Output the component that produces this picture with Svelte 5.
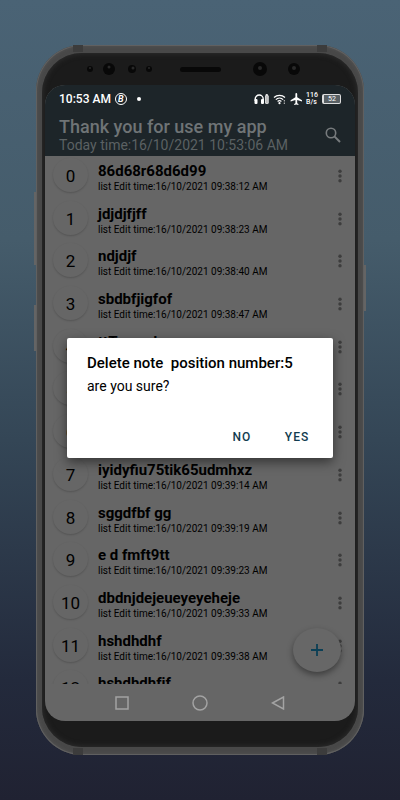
<!-- Notes app inside a phone frame, with the delete confirmation open -->
<script lang="ts">
	type Note = { title: string; edited: string };

	let notes: Note[] = $state([
		{ title: '86d68r68d6d99', edited: '09:38:12 AM' },
		{ title: 'jdjdjfjff', edited: '09:38:23 AM' },
		{ title: 'ndjdjf', edited: '09:38:40 AM' },
		{ title: 'sbdbfjigfof', edited: '09:38:47 AM' },
		{ title: 'ttTauzud', edited: '' },
		{ title: '', edited: '' },
		{ title: '', edited: '' },
		{ title: 'iyidyfiu75tik65udmhxz', edited: '09:39:14 AM' },
		{ title: 'sggdfbf gg', edited: '09:39:19 AM' },
		{ title: 'e d fmft9tt', edited: '09:39:23 AM' },
		{ title: 'dbdnjdejeueyeyeheje', edited: '09:39:33 AM' },
		{ title: 'hshdhdhf', edited: '09:39:38 AM' },
		{ title: 'hshdhdhfjf', edited: '' }
	]);

	let selected = $state(5);
	let dialogOpen = $state(true);

	function askDelete(index: number) {
		selected = index;
		dialogOpen = true;
	}

	function confirmDelete() {
		notes.splice(selected, 1);
		dialogOpen = false;
	}
</script>

<div class="backdrop">
	<div class="phone">
		<span class="key volume"></span>
		<span class="key bixby"></span>
		<span class="key power"></span>
		<span class="seam top left"></span>
		<span class="seam top right"></span>
		<span class="seam bottom left"></span>
		<span class="seam bottom right"></span>

		<div class="bezel">
			<div class="sensors">
				<svg width="240" height="20" viewBox="0 0 240 20" aria-hidden="true">
					<g fill="#080808">
						<circle cx="10" cy="10" r="3" />
						<circle cx="29" cy="10" r="6" />
						<circle cx="52" cy="10" r="4" />
						<circle cx="69" cy="10" r="3" />
						<rect x="100" y="8" width="41" height="5" rx="2.5" />
						<circle cx="180" cy="10" r="7" />
						<circle cx="214" cy="10" r="6" />
					</g>
					<g fill="#292929">
						<circle cx="10" cy="9" r="1" />
						<circle cx="29" cy="8" r="1.5" />
						<circle cx="53" cy="9" r="1.5" />
						<circle cx="69" cy="9" r="1" />
						<circle cx="180" cy="9" r="2" />
						<circle cx="214" cy="9" r="2" />
					</g>
				</svg>
			</div>

			<div class="screen">
				<div class="status">
					<span class="clock">10:53 AM</span>
					<span class="app-badge">B</span>
					<span class="dot"></span>
					<span class="fill"></span>
					<svg width="15" height="12" viewBox="0 0 15 12" aria-hidden="true">
						<path d="M1.2 8V6a4 4 0 0 1 8 0v2" fill="none" stroke="#fff" stroke-width="1.4" />
						<rect x="0.5" y="6" width="3" height="5" rx="1" fill="#fff" />
						<rect x="7" y="6" width="3" height="5" rx="1" fill="#fff" />
						<path d="M12 2.500V1.500h1.500v1" stroke="#ddd" fill="none" />
						<rect x="11.500" y="2.500" width="2.800" height="8" rx="0.500" fill="#bbb" stroke="#fff" stroke-width="0.700" />
					</svg>
					<svg width="13" height="12" viewBox="0 0 13 12" aria-hidden="true">
						<path d="M1 4.500a8 8 0 0 1 11 0M2.800 6.600a5.400 5.400 0 0 1 7.400 0M4.600 8.500a2.800 2.800 0 0 1 3.800 0" fill="none" stroke="#fff" stroke-width="1.2" />
						<circle cx="6.5" cy="10.2" r="1.1" fill="#fff" />
						<path d="M11.300 7v1.500M11.300 9.500V11" stroke="#ccc" />
					</svg>
					<svg width="12" height="12" viewBox="1 2 20 20" aria-hidden="true">
						<path d="M21 16v-2l-8-5V3.500a1.500 1.500 0 0 0-3 0V9l-8 5v2l8-2.500V19l-2 1.500V22l3.500-1 3.500 1v-1.500L13 19v-5.500z" fill="#fff" />
					</svg>
					<span class="rate"><span>116</span><span>B/s</span></span>
					<span class="battery">52</span>
				</div>

				<header>
					<div class="heading">
						<h1>Thank you for use my app</h1>
						<p>Today time:16/10/2021 10:53:06 AM</p>
					</div>
					<button class="search" aria-label="Search">
						<svg width="16" height="16" viewBox="0 0 16 16" aria-hidden="true">
							<circle cx="6" cy="6" r="4.7" fill="none" stroke="#777b7d" stroke-width="1.6" />
							<path d="M9.400 9.400l5.600 5.600" stroke="#777b7d" stroke-width="2" />
						</svg>
					</button>
				</header>

				<main>
					<ul>
						{#each notes as note, i}
							<li>
								<span class="avatar">{i}</span>
								<div class="note">
									<h2>{note.title}</h2>
									{#if note.edited}
										<p>list Edit time:16/10/2021 {note.edited}</p>
									{/if}
								</div>
								<button class="more" aria-label="Delete note {i}" onclick={() => askDelete(i)}>
									<svg width="4" height="14" viewBox="0 0 4 14" aria-hidden="true">
										<circle cx="2" cy="2.3" r="1.7" />
										<circle cx="2" cy="7" r="1.7" />
										<circle cx="2" cy="11.7" r="1.7" />
									</svg>
								</button>
							</li>
						{/each}
					</ul>
					<button class="fab" aria-label="Add note">
						<svg width="12" height="12" viewBox="0 0 12 12" aria-hidden="true">
							<path d="M6 0v12M0 6h12" stroke="#0b3f55" stroke-width="1.8" />
						</svg>
					</button>
				</main>

				<nav>
					<button aria-label="Recent apps">
						<svg width="14" height="14" viewBox="0 0 14 14"><rect x="1" y="1" width="12" height="12" /></svg>
					</button>
					<button aria-label="Home">
						<svg width="16" height="16" viewBox="0 0 16 16"><circle cx="8" cy="8" r="7" /></svg>
					</button>
					<button aria-label="Back">
						<svg width="14" height="14" viewBox="0 0 14 14"><path d="M1.500 7L12.500 1v12z" /></svg>
					</button>
				</nav>

				{#if dialogOpen}
					<div class="overlay">
						<div class="dialog" role="alertdialog" aria-labelledby="dialog-title" aria-describedby="dialog-text">
							<h2 id="dialog-title">Delete note&nbsp; position number:{selected}</h2>
							<p id="dialog-text">are you sure?</p>
							<div class="actions">
								<button onclick={() => (dialogOpen = false)}>NO</button>
								<button onclick={confirmDelete}>YES</button>
							</div>
						</div>
					</div>
				{/if}
			</div>
		</div>
	</div>
</div>

<style>
	:global(body) { margin: 0; }
	h1, h2, p, ul { margin: 0; padding: 0; font-weight: 400; }
	button {
		display: flex;
		align-items: center;
		justify-content: center;
		padding: 0;
		border: 0;
		background: none;
		font-family: inherit;
		cursor: pointer;
	}
	svg { flex: none; }

	.backdrop {
		box-sizing: border-box;
		min-height: 100vh;
		padding: 45px 36px;
		background: linear-gradient(#4a6375 0%, #455c6b 30%, #344656 55%, #232a3c 85%, #202232 100%);
		font-family: Roboto, sans-serif;
		color: #000;
	}

	/* Phone body */
	.phone {
		position: relative;
		padding: 8px 6px;
		border-radius: 46px;
		background: #484848;
		box-shadow: inset 0 0 0 1px #606060, inset 0 0 3px 2px #505050;
	}
	.bezel {
		padding: 0 3px 26px;
		border-radius: 40px;
		background: #1b1b1b;
		box-shadow: inset 0 0 5px 1px #2c2c2c;
	}
	.sensors {
		display: flex;
		justify-content: center;
		padding: 6px 0;
	}
	.key {
		position: absolute;
		width: 2px;
		background: #646464;
	}
	.volume { left: -2px; top: 147px; height: 73px; }
	.bixby { left: -2px; top: 260px; height: 46px; }
	.power { right: -2px; top: 220px; height: 46px; }
	.seam {
		position: absolute;
		width: 10px;
		height: 7px;
		background: #3c3c3c;
	}
	.seam.top { top: 0; }
	.seam.bottom { bottom: 0; }
	.seam.left { left: 37px; }
	.seam.right { right: 37px; }

	/* Dimmed app screen */
	.screen {
		position: relative;
		overflow: hidden;
		border-radius: 20px;
		background: #666;
	}
	.status {
		display: flex;
		align-items: center;
		gap: 4px;
		height: 28px;
		padding: 0 14px;
		background: #1d2529;
		color: #fff;
	}
	.clock { font-size: 12px; font-weight: 500; }
	.app-badge {
		width: 10px;
		height: 10px;
		border: 1px solid #fff;
		border-radius: 50%;
		font-size: 9px;
		font-style: italic;
		font-weight: 700;
		line-height: 10px;
		text-align: center;
	}
	.dot {
		width: 4px;
		height: 4px;
		margin-left: 6px;
		border-radius: 50%;
		background: #fff;
	}
	.fill { flex: 1; }
	.rate {
		display: flex;
		flex-direction: column;
		font-size: 7px;
		font-weight: 500;
		line-height: 7px;
	}
	.battery {
		width: 16px;
		border: 1px solid #ddd;
		border-left-width: 2px;
		border-radius: 2px;
		background: #596064;
		font-size: 7px;
		line-height: 8px;
		text-align: center;
	}
	header {
		display: flex;
		align-items: center;
		justify-content: space-between;
		height: 43px;
		padding: 0 14px;
		background: #1d2529;
		color: #6f7476;
	}
	h1 {
		font-size: 18px;
		font-weight: 500;
		line-height: 20px;
		white-space: nowrap;
	}
	.heading p {
		color: #5b6163;
		font-size: 14px;
		line-height: 16px;
		white-space: nowrap;
	}

	main {
		position: relative;
		height: 528px;
		overflow: hidden;
	}
	/* the last row is cut by the navigation bar */
	ul {
		display: grid;
		grid-template-rows: repeat(13, 1fr);
		height: 555px;
		list-style: none;
	}
	li {
		display: flex;
		align-items: flex-start;
		padding: 2px 8px;
	}
	.avatar {
		width: 35px;
		height: 34px;
		border-radius: 50%;
		box-shadow: 0 1px 2px rgba(0, 0, 0, 0.18);
		font-size: 17px;
		line-height: 37px;
		text-align: center;
	}
	.note { flex: 1; padding: 4px 0 0 10px; }
	.note h2 { font-size: 15px; font-weight: 700; line-height: 18px; }
	.note p { font-size: 10px; line-height: 14px; white-space: nowrap; }
	.more { width: 14px; height: 36px; }
	.more svg { fill: #3d3d3d; }
	.fab {
		position: absolute;
		right: 14px;
		bottom: 12px;
		width: 48px;
		height: 44px;
		border-radius: 50%;
		background: #676767;
		box-shadow: 0 3px 6px rgba(0, 0, 0, 0.4);
	}

	nav {
		display: flex;
		align-items: center;
		justify-content: center;
		gap: 62px;
		height: 37px;
	}
	nav button { width: 16px; height: 16px; }
	nav svg { fill: none; stroke: #a3a3a3; stroke-width: 1.5; }

	/* Delete confirmation */
	.overlay {
		position: absolute;
		inset: 0;
		display: flex;
		align-items: center;
		padding: 0 22px 10px;
	}
	.dialog {
		flex: 1;
		padding: 16px 16px 6px 20px;
		border-radius: 2px;
		background: #fff;
		box-shadow: 0 4px 12px rgba(0, 0, 0, 0.5);
	}
	.dialog h2 { font-size: 15px; font-weight: 500; line-height: 18px; }
	.dialog p { margin-top: 5px; font-size: 14px; line-height: 18px; }
	.actions {
		display: flex;
		justify-content: flex-end;
		gap: 15px;
		margin-top: 27px;
	}
	.actions button {
		width: 40px;
		height: 30px;
		color: #123c50;
		font-size: 12px;
		font-weight: 500;
		letter-spacing: 1px;
	}
</style>
